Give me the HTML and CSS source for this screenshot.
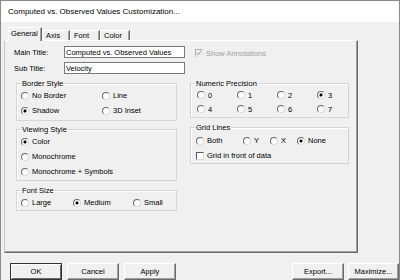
FILE: index.html
```html
<!DOCTYPE html>
<html>
<head>
<meta charset="utf-8">
<title>Computed vs. Observed Values Customization</title>
<link rel="stylesheet" href="styles.css">
</head>
<body>
<div class="window">
  <div class="titlebar">Computed vs. Observed Values Customization...</div>
  <div class="client">
    <div class="tabs">
      <div class="tab active w-general">General</div>
      <div class="tab w-axis">Axis</div>
      <div class="tab w-font">Font</div>
      <div class="tab w-color">Color</div>
    </div>
    <div class="panel">
      <div class="field-row">
        <span class="field-label">Main Title:</span>
        <input class="textbox" type="text" value="Computed vs. Observed Values">
        <label class="check disabled show-ann"><span class="box"><svg viewBox="0 0 8 8" width="6" height="6"><polyline points="1,4 3,6 7,1" fill="none" stroke="#a0a0a0" stroke-width="1.4"/></svg></span>Show Annotations</label>
      </div>
      <div class="field-row second">
        <span class="field-label">Sub Title:</span>
        <input class="textbox" type="text" value="Velocity">
      </div>
      <div class="groups">
        <div class="col">
          <fieldset class="group">
            <legend>Border Style</legend>
            <div class="opts border-opts">
              <label class="opt"><input class="rb" type="radio" name="bs">No Border</label>
              <label class="opt"><input class="rb" type="radio" name="bs">Line</label>
              <label class="opt"><input class="rb" type="radio" name="bs" checked>Shadow</label>
              <label class="opt"><input class="rb" type="radio" name="bs">3D Inset</label>
            </div>
          </fieldset>
          <fieldset class="group viewing">
            <legend>Viewing Style</legend>
            <div class="opts view-opts">
              <label class="opt"><input class="rb" type="radio" name="vs" checked>Color</label>
              <label class="opt"><input class="rb" type="radio" name="vs">Monochrome</label>
              <label class="opt"><input class="rb" type="radio" name="vs">Monochrome + Symbols</label>
            </div>
          </fieldset>
          <fieldset class="group fontsize">
            <legend>Font Size</legend>
            <div class="opts size-opts">
              <label class="opt"><input class="rb" type="radio" name="fs">Large</label>
              <label class="opt"><input class="rb" type="radio" name="fs" checked>Medium</label>
              <label class="opt"><input class="rb" type="radio" name="fs">Small</label>
            </div>
          </fieldset>
        </div>
        <div class="col">
          <fieldset class="group">
            <legend>Numeric Precision</legend>
            <div class="opts prec-opts">
              <label class="opt"><input class="rb" type="radio" name="np">0</label>
              <label class="opt"><input class="rb" type="radio" name="np">1</label>
              <label class="opt"><input class="rb" type="radio" name="np">2</label>
              <label class="opt"><input class="rb" type="radio" name="np" checked>3</label>
              <label class="opt"><input class="rb" type="radio" name="np">4</label>
              <label class="opt"><input class="rb" type="radio" name="np">5</label>
              <label class="opt"><input class="rb" type="radio" name="np">6</label>
              <label class="opt"><input class="rb" type="radio" name="np">7</label>
            </div>
          </fieldset>
          <fieldset class="group gridlines">
            <legend>Grid Lines</legend>
            <div class="opts grid-opts">
              <label class="opt"><input class="rb" type="radio" name="gl">Both</label>
              <label class="opt"><input class="rb" type="radio" name="gl">Y</label>
              <label class="opt"><input class="rb" type="radio" name="gl">X</label>
              <label class="opt"><input class="rb" type="radio" name="gl" checked>None</label>
              <label class="check span-all"><span class="box"></span>Grid in front of data</label>
            </div>
          </fieldset>
        </div>
      </div>
    </div>
    <div class="buttons">
      <button class="btn default">OK</button>
      <button class="btn">Cancel</button>
      <button class="btn">Apply</button>
      <button class="btn push-right">Export...</button>
      <button class="btn last">Maximize...</button>
    </div>
  </div>
</div>
</body>
</html>
```
FILE: styles.css
```css
* { box-sizing: border-box; }
html, body { margin: 0; padding: 0; }
body {
  width: 400px;
  height: 280px;
  overflow: hidden;
  background: #f0f0f0;
  font-family: "Liberation Sans", Arial, sans-serif;
  font-size: 7.5px;
  color: #000;
}
.window {
  width: 400px;
  height: 280px;
  border: 1px solid #8a8a8a;
  border-bottom: none;
  display: flex;
  flex-direction: column;
  overflow: hidden;
  background: #f0f0f0;
}
.titlebar {
  flex: none;
  height: 21px;
  background: #fff;
  font-size: 8px;
  line-height: 22px;
  padding-left: 7px;
  color: #000;
}
.client {
  flex: 1;
  display: flex;
  flex-direction: column;
  padding: 5px 0 0 3px;
}
.tabs {
  display: flex;
  align-items: flex-end;
  height: 14px;
  margin-left: 4px;
  margin-bottom: -1px;
  position: relative;
  z-index: 1;
}
.tab {
  height: 10px;
  margin-bottom: 1px;
  line-height: 9px;
  padding-left: 3px;
  border-top: 1px solid #fff;
  border-left: 1px solid #fff;
  border-right: 1px solid #696969;
  box-shadow: inset -1px 0 #a0a0a0;
  background: #f0f0f0;
  white-space: nowrap;
}
.tab.active {
  height: 14px;
  margin-bottom: 0;
  line-height: 12px;
  padding-left: 2px;
}
.w-general { width: 34px; }
.w-axis { width: 28px; }
.w-font { width: 30px; }
.w-color { width: 30px; }
.panel {
  width: 354px;
  height: 213px;
  flex: none;
  border: 1px solid;
  border-color: #fff #696969 #696969 #c8c8c8;
  box-shadow: inset -1px -1px #a0a0a0;
}
.field-row {
  display: flex;
  align-items: center;
  height: 12px;
  margin-top: 5px;
  padding-left: 9px;
}
.field-row.second { margin-top: 4px; }
.field-label { width: 50px; flex: none; }
.textbox {
  width: 121px;
  height: 12px;
  margin: 0;
  border: 1px solid #7a7a7a;
  background: #fff;
  font: inherit;
  color: #000;
  padding: 0 1px;
  line-height: 10px;
  outline: none;
}
.check {
  display: flex;
  align-items: center;
}
.show-ann { margin-left: 10px; color: #a0a0a0; margin-top: 2px; }
.box {
  width: 8px;
  height: 8px;
  margin-right: 3px;
  flex: none;
  border: 1px solid;
  border-color: #5a5a5a #dcdcdc #dcdcdc #5a5a5a;
  background: #fff;
  display: flex;
  align-items: center;
  justify-content: center;
}
.disabled .box {
  border-color: #b0b0b0 #e6e6e6 #e6e6e6 #b0b0b0;
  background: #f0f0f0;
}
.groups {
  display: grid;
  grid-template-columns: 161px 159px;
  column-gap: 13px;
  margin-top: 5px;
  padding-left: 11px;
  align-items: start;
}
.col { display: flex; flex-direction: column; }
.group {
  margin: 0;
  padding: 0;
  min-width: 0;
  border: 1px solid #d5d5d5;
  box-shadow: inset 1px 1px #fff;
}
.group legend {
  padding: 0 1px;
  margin-left: 4px;
  line-height: 9px;
  font-size: 7.5px;
}
.viewing { margin-top: 4px; }
.fontsize { margin-top: 5px; }
.gridlines { margin-top: 5px; }
.opts {
  display: grid;
  grid-auto-rows: 15px;
  padding-left: 4px;
}
.opt {
  display: flex;
  align-items: center;
  white-space: nowrap;
}
.rb {
  appearance: none;
  -webkit-appearance: none;
  width: 8px;
  height: 8px;
  margin: 0 3px 0 0;
  flex: none;
  border-radius: 50%;
  border: 1px solid;
  border-color: #6a6a6a #dadada #dadada #6a6a6a;
  background: #fff;
}
.rb:checked {
  background: radial-gradient(circle, #000 0 1.3px, #fff 1.8px);
}
.border-opts { grid-template-columns: 81px 1fr; padding-bottom: 2px; }
.view-opts { padding-bottom: 1px; }
.size-opts { grid-template-columns: 52px 60px 1fr; }
.prec-opts {
  grid-template-columns: 40px 40px 40px 1fr;
  grid-auto-rows: 14px;
  padding-left: 6px;
  padding-bottom: 1px;
}
.grid-opts {
  grid-template-columns: 47px 27px 27px 1fr;
  padding-left: 5px;
  padding-top: 1px;
}
.span-all { grid-column: 1 / -1; }
.buttons {
  display: flex;
  margin-top: 10px;
  padding-left: 6px;
}
.btn {
  width: 52px;
  height: 17px;
  margin: 0 5px 0 0;
  padding: 0;
  flex: none;
  font: inherit;
  color: #000;
  background: #f0f0f0;
  border: 1px solid;
  border-color: #fff #696969 #696969 #fff;
  box-shadow: inset -1px -1px #a0a0a0;
}
.btn.default {
  border-color: #333;
  box-shadow: inset 1px 1px #fff, inset -1px -1px #696969;
}
.push-right { margin-left: auto; margin-right: 4px; }
.btn.last { width: 51px; margin-right: 0; }
```
